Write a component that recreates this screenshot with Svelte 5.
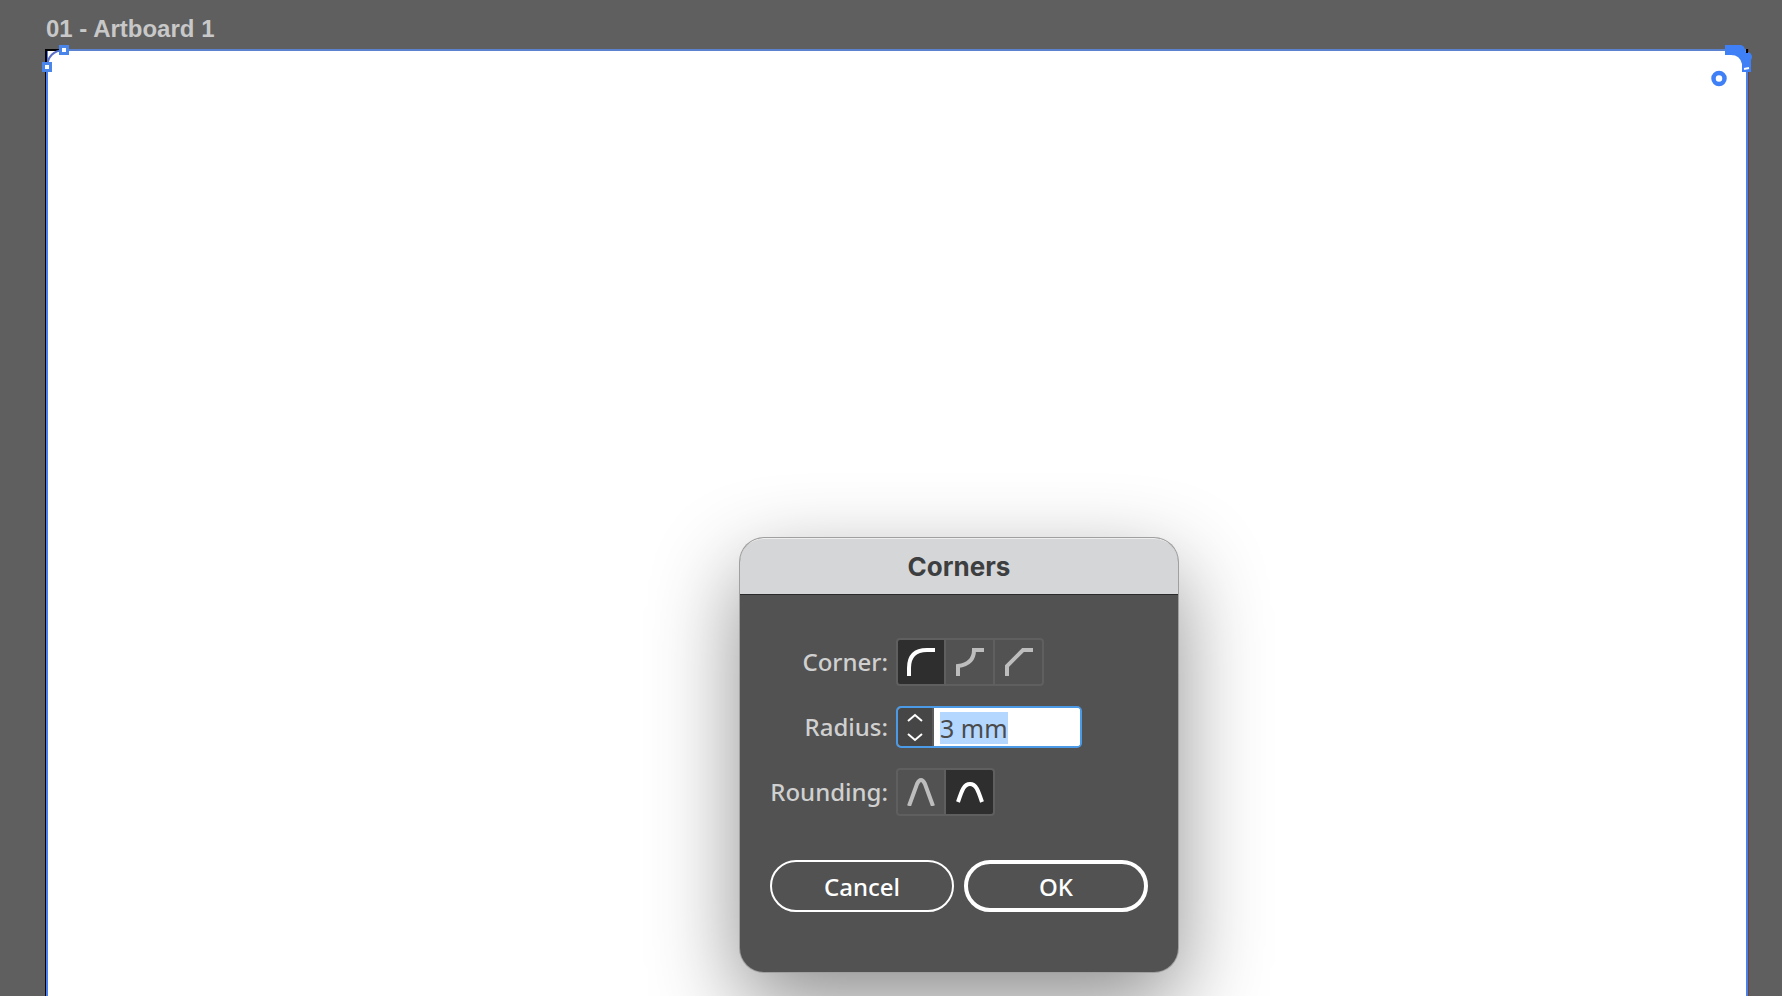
<script lang="ts">
	import { onMount } from 'svelte';

	const corners = [
		{ name: 'Round', path: 'M2 28V20Q2 2 20 2H28' },
		{ name: 'Inverted round', path: 'M2 28V18Q18 16 18 2H28' },
		{ name: 'Chamfer', path: 'M2 28V18L18 2H28' }
	];

	const roundings = [
		{ name: 'Absolute', path: 'M2 28L10 6Q14 -2 18 6L26 28' },
		{ name: 'Relative', path: 'M2 24C6 12 8 6 14 6S22 12 26 24' }
	];

	let corner = $state('Round');
	let rounding = $state('Relative');
	let radius = $state('3 mm');
	let open = $state(true);
	let radiusEl = $state<HTMLInputElement>();

	onMount(() => {
		radiusEl?.focus();
		radiusEl?.select();
	});

	function step(amount: number) {
		const next = Math.max(0, (parseFloat(radius) || 0) + amount);
		radius = `${next} mm`;
	}
</script>

<main class="workspace">
	<h1 class="artboard-name">01 - Artboard 1</h1>

	<div class="artboard">
		<svg class="anchor-left" width="30" height="34" viewBox="0 0 30 34" aria-hidden="true">
			<path d="M6 24V6H24" fill="none" stroke="#000" stroke-width="2" />
			<path d="M7 23Q8 7 24 6" fill="none" stroke="#5a6fc8" stroke-width="2" />
			<rect x="3.5" y="19.5" width="7" height="7" fill="#fff" stroke="#4a86ea" stroke-width="3" />
			<rect x="20.5" y="2.5" width="7" height="7" fill="#fff" stroke="#4a86ea" stroke-width="3" />
		</svg>
		<svg class="anchor-right" width="48" height="48" viewBox="0 0 48 48" aria-hidden="true">
			<g fill="#3f80f6">
				<path d="M21 1H36L47 13V28H38V20Q36 11 27 11H21Z" />
				<circle cx="36" cy="6" r="5" />
				<circle cx="43" cy="13" r="5" />
			</g>
			<path d="M42 5H44V9H42Z" fill="#000" />
			<path d="M40 25L45 24" stroke="#fff" stroke-width="2" />
			<circle cx="15" cy="34.5" r="5.5" fill="#fff" stroke="#3f80f6" stroke-width="4.5" />
		</svg>
	</div>

	{#if open}
		<div class="dialog" role="dialog" aria-labelledby="dialog-title">
			<h2 class="title" id="dialog-title">Corners</h2>

			<form class="body" onsubmit={(e) => { e.preventDefault(); open = false; }}>
				<div class="fields">
					<span class="label" id="corner-label">Corner:</span>
					<div class="options" role="group" aria-labelledby="corner-label">
						{#each corners as item}
							<button
								class="option"
								class:selected={corner === item.name}
								type="button"
								aria-label={item.name}
								aria-pressed={corner === item.name}
								onclick={() => (corner = item.name)}
							>
								<svg width="28" height="28" viewBox="0 0 28 28"><path d={item.path} /></svg>
							</button>
						{/each}
					</div>

					<label class="label" for="radius">Radius:</label>
					<div class="radius">
						<div class="stepper">
							<button type="button" aria-label="Increase radius" onclick={() => step(1)}>
								<svg width="16" height="10" viewBox="0 0 16 10"><path d="M1 8L8 2L15 8" /></svg>
							</button>
							<button type="button" aria-label="Decrease radius" onclick={() => step(-1)}>
								<svg width="16" height="10" viewBox="0 0 16 10"><path d="M1 2L8 8L15 2" /></svg>
							</button>
						</div>
						<input id="radius" type="text" bind:value={radius} bind:this={radiusEl} autocomplete="off" />
					</div>

					<span class="label" id="rounding-label">Rounding:</span>
					<div class="options" role="group" aria-labelledby="rounding-label">
						{#each roundings as item}
							<button
								class="option"
								class:selected={rounding === item.name}
								type="button"
								aria-label={item.name}
								aria-pressed={rounding === item.name}
								onclick={() => (rounding = item.name)}
							>
								<svg width="28" height="28" viewBox="0 0 28 28"><path d={item.path} /></svg>
							</button>
						{/each}
					</div>
				</div>

				<div class="actions">
					<button class="action" type="button" onclick={() => (open = false)}>Cancel</button>
					<button class="action primary" type="submit">OK</button>
				</div>
			</form>
		</div>
	{/if}
</main>

<style>
	:global(body) {
		margin: 0;
		background: #5f5f5f;
	}

	.workspace {
		position: relative;
		box-sizing: border-box;
		display: flex;
		flex-direction: column;
		min-height: 100vh;
		padding: 13px 34px 0 46px;
		overflow: hidden;
		background: #5f5f5f;
		font-family: 'Noto Sans', 'Open Sans', sans-serif;
	}

	.artboard-name {
		margin: 0 0 4px;
		color: #c8c8c8;
		font-family: 'Liberation Sans', Arial, sans-serif;
		font-size: 24px;
		font-weight: 700;
		line-height: 32px;
	}

	.artboard {
		position: relative;
		flex: 1;
		border-top: 2px solid #5b82cf;
		border-right: 2px solid #4a80e8;
		border-left: 2px solid #4a80f0;
		background: #fff;
		box-shadow: -1px 0 0 #000, 1px 0 0 #6b4444;
	}

	.anchor-left,
	.anchor-right {
		position: absolute;
		overflow: visible;
	}

	.anchor-left {
		top: -7px;
		left: -8px;
	}

	.anchor-right {
		top: -7px;
		right: -6px;
	}

	.dialog {
		position: absolute;
		top: 538px;
		left: 740px;
		width: 438px;
		border-radius: 24px;
		background: #525252;
		box-shadow: 0 0 0 1px #a0a0a0, 0 32px 88px rgba(0, 0, 0, 0.45);
	}

	.title {
		margin: 0;
		border-top: 1px solid #eee;
		border-bottom: 1px solid #2a2a2a;
		border-radius: 24px 24px 0 0;
		background: #d5d6d8;
		color: #3d3e40;
		font-family: Inter, sans-serif;
		font-size: 26px;
		font-weight: 700;
		line-height: 55px;
		text-align: center;
	}

	.body {
		padding: 43px 30px 60px;
	}

	.fields {
		display: grid;
		grid-template-columns: 118px 1fr;
		column-gap: 8px;
		row-gap: 20px;
		align-items: center;
	}

	.label {
		color: #d0d0d0;
		font-size: 24px;
		font-weight: 500;
		line-height: 32px;
		text-align: right;
		white-space: nowrap;
	}

	.options {
		display: flex;
	}

	.option {
		display: flex;
		align-items: center;
		justify-content: center;
		box-sizing: border-box;
		width: 51px;
		height: 48px;
		margin: 0 0 0 -2px;
		padding: 0;
		border: 2px solid #5f5f5f;
		background: none;
		color: #bdbdbd;
	}

	.option:first-child {
		width: 50px;
		margin-left: 0;
		border-radius: 4px 0 0 4px;
	}

	.option:last-child {
		border-radius: 0 4px 4px 0;
	}

	.option.selected {
		background: #2e2e2e;
		color: #fff;
	}

	.option path {
		fill: none;
		stroke: currentColor;
		stroke-width: 4;
	}

	.radius {
		display: flex;
		width: 182px;
		height: 38px;
		overflow: hidden;
		border: 2px solid #4b9ae8;
		border-radius: 5px;
		background: #fff;
	}

	.stepper {
		display: flex;
		flex-direction: column;
		width: 34px;
		border-right: 2px solid #5a5a5a;
		background: #464646;
	}

	.stepper button {
		display: flex;
		flex: 1;
		align-items: center;
		justify-content: center;
		padding: 0;
		border: none;
		background: none;
	}

	.stepper path {
		fill: none;
		stroke: #fff;
		stroke-width: 2;
	}

	.radius input {
		flex: 1;
		min-width: 0;
		padding: 2px 6px 0;
		border: none;
		outline: none;
		background: #fff;
		color: #4a4a4a;
		font-family: inherit;
		font-size: 25px;
		line-height: 32px;
	}

	.radius input::selection {
		background: #b3d7ff;
		color: #4a4a4a;
	}

	.actions {
		display: flex;
		gap: 10px;
		margin-top: 44px;
	}

	.action {
		box-sizing: border-box;
		flex: 1 1 0;
		min-width: 184px;
		height: 52px;
		padding: 0;
		border: 2px solid #fff;
		border-radius: 26px;
		background: none;
		color: #fff;
		font-family: inherit;
		font-size: 24px;
		font-weight: 500;
	}

	.action.primary {
		border-width: 4px;
	}
</style>
